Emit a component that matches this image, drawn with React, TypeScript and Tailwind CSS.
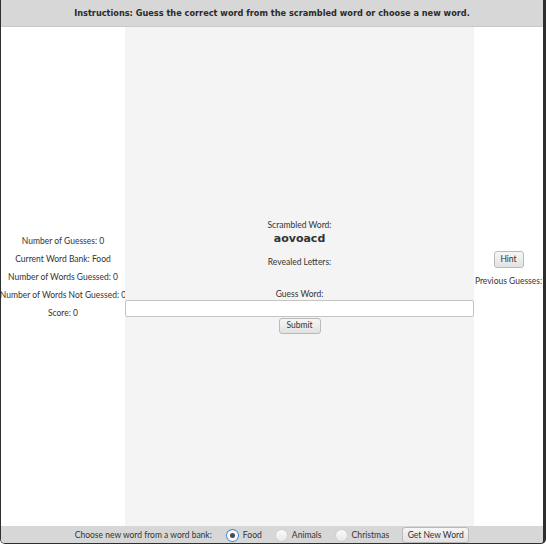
import React from "react";

const sans = { fontFamily: "Lato, 'Liberation Sans', sans-serif" } as const;

function Radio({ checked, label }: { checked?: boolean; label: string }) {
  return (
    <div className="flex items-center gap-[4px]">
      {checked ? (
        <div className="w-[13px] h-[13px] rounded-full bg-[#2f8ae0] flex items-center justify-center">
          <div className="w-[11px] h-[11px] rounded-full bg-[#f7f7f7] flex items-center justify-center">
            <div className="w-[5px] h-[5px] rounded-full bg-[#4a4a4a]" />
          </div>
        </div>
      ) : (
        <div className="w-[13px] h-[13px] rounded-full border border-[#cfcfcf] bg-gradient-to-b from-[#fafafa] to-[#e8e8e8]" />
      )}
      <span className="text-[8.6px] text-[#333] leading-[11px]">{label}</span>
    </div>
  );
}

function Btn({ children, className = "" }: { children: React.ReactNode; className?: string }) {
  return (
    <div
      className={`flex items-center justify-center border border-[#b9b9b9] rounded-[3px] bg-gradient-to-b from-[#f6f6f6] to-[#e2e2e2] text-[8.5px] leading-[11px] text-[#333] ${className}`}
    >
      {children}
    </div>
  );
}

export default function App() {
  return (
    <div
      className="w-[546px] h-[544px] flex flex-col bg-white border-l-[1px] border-r-[3px] border-b-[1px] border-[#2e2e2e] rounded-b-[5px] overflow-hidden"
      style={sans}
    >
      <div className="h-[27px] shrink-0 bg-[#d7d7d7] border-b border-[#c8c8c8] flex items-center justify-center">
        <span
          className="text-[8.2px] font-bold text-[#2b2b2b] whitespace-nowrap"
          style={{ fontFamily: "'DejaVu Sans', sans-serif" }}
        >
          Instructions: Guess the correct word from the scrambled word or choose a new word.
        </span>
      </div>
      <div className="flex-1 flex min-h-0">
        <div className="w-[124px] shrink-0 flex flex-col items-center justify-center gap-[7px] text-[8.5px] leading-[11px] text-[#333] pt-[1px]">
          <div className="whitespace-nowrap">Number of Guesses: 0</div>
          <div className="whitespace-nowrap">Current Word Bank: Food</div>
          <div className="whitespace-nowrap">Number of Words Guessed: 0</div>
          <div className="whitespace-nowrap">Number of Words Not Guessed: 0</div>
          <div className="whitespace-nowrap">Score: 0</div>
        </div>
        <div className="w-[349px] shrink-0 bg-[#f4f4f4] flex flex-col items-center justify-center text-[8.5px] text-[#333]">
          <div className="whitespace-nowrap leading-[11px]">Scrambled Word:</div>
          <div
            className="text-[11px] font-bold text-[#333] leading-[13px] mt-[1px]"
            style={{ fontFamily: "'DejaVu Sans', sans-serif" }}
          >
            aovoacd
          </div>
          <div className="mt-[12px] leading-[11px]">Revealed Letters:</div>
          <div className="mt-[21px] leading-[11px]">Guess Word:</div>
          <div className="w-full h-[17px] bg-white border border-[#c4c4c4] rounded-[2px]" />
          <Btn className="mt-[1px] w-[42px] h-[16px]">Submit</Btn>
        </div>
        <div className="flex-1 min-w-0 flex flex-col items-center justify-center text-[8.5px] leading-[11px] text-[#333] pb-[16px]">
          <Btn className="w-[30px] h-[17px]">Hint</Btn>
          <div className="mt-[8px] whitespace-nowrap">Previous Guesses:</div>
        </div>
      </div>
      <div className="h-[17px] shrink-0 bg-[#d7d7d7] flex items-center justify-center gap-[13px] pt-[1px]">
        <span className="text-[8.5px] leading-[11px] text-[#333] mr-[1px]">Choose new word from a word bank:</span>
        <Radio checked label="Food" />
        <Radio label="Animals" />
        <Radio label="Christmas" />
        <Btn className="w-[67px] h-[16px]">Get New Word</Btn>
      </div>
    </div>
  );
}
